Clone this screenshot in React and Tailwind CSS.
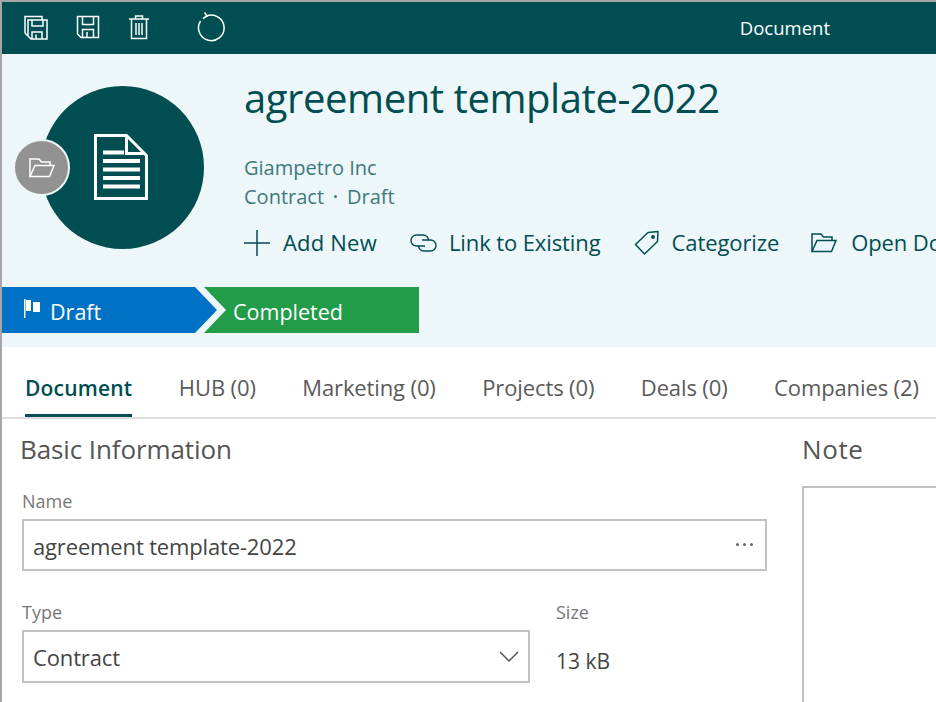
const font = "font-['Open_Sans',sans-serif]";

const TopIcons = () => (
  <div className="flex items-center pb-[2px]">
    <svg width="28" height="28" viewBox="0 0 28 28" fill="none" stroke="white" strokeWidth="1.500" className="ml-[18px] shrink-0">
      <path d="M5 20V3.500h17V7" />
      <path d="M5 20l3 3" />
      <path d="M8 7h19v19H11l-3-3z" />
      <path d="M12 7v6h11V7M12 26v-7h10v7M16 21.500V26" />
    </svg>
    <svg width="26" height="28" viewBox="0 0 26 28" fill="none" stroke="white" strokeWidth="1.500" className="ml-[27px] shrink-0">
      <path d="M2.500 3.500h21v21H6L2.500 21z" />
      <path d="M7.500 3.500v8h11v-8M7.500 24.500v-8h11v8M12 19v5.500" />
    </svg>
    <svg width="24" height="28" viewBox="0 0 24 28" fill="none" stroke="white" strokeWidth="1.500" className="ml-[26px] shrink-0">
      <path d="M2 6h20M8.500 6V3h7v3M4.500 6v19.500h15V6M9 10v12M12 10v12M15 10v12" />
    </svg>
    <svg width="30" height="30" viewBox="0 0 30 30" fill="none" stroke="white" strokeWidth="1.500" className="ml-[46px] shrink-0">
      <path d="M9.500 4a12.800 12.800 0 1 1-6 5" />
      <path d="M7.500 0.500l2.500 3.500-4 2.500" />
    </svg>
  </div>
);

const PlusIcon = () => (
  <svg width="26" height="26" viewBox="0 0 26 26" fill="none" stroke="#004e52" strokeWidth="1.500" className="shrink-0">
    <path d="M13 0v26M0 13h26" />
  </svg>
);

const LinkIcon = () => (
  <svg width="27" height="18" viewBox="0 0 27 18" fill="none" stroke="#004e52" strokeWidth="1.400" className="shrink-0">
    <path d="M15 12H6.500a5.500 5.500 0 0 1 0-11H13a5.500 5.500 0 0 1 5.500 5.500" />
    <path d="M12 6h8.500a5.500 5.500 0 0 1 0 11H14a5.500 5.500 0 0 1-5.500-5.500" />
  </svg>
);

const TagIcon = () => (
  <svg width="26" height="26" viewBox="0 0 26 26" fill="none" stroke="#004e52" strokeWidth="1.500" className="shrink-0">
    <path d="M1.500 14.500 14 2.500l10-1-.5 10L10.500 24z" strokeLinejoin="round" />
    <circle cx="19" cy="7" r="1.200" fill="#004e52" />
  </svg>
);

const FolderIcon = ({ color = "#004e52" }) => (
  <svg width="26" height="20" viewBox="0 0 26 20" fill="none" stroke={color} strokeWidth="1.500" className="shrink-0">
    <path d="M1 18.500V1h9l2.500 3H21v3.500" />
    <path d="M1 18.500 6 7.500h19l-4.500 11z" />
  </svg>
);

const tabs = ["HUB (0)", "Marketing (0)", "Projects (0)", "Deals (0)", "Companies (2)"];

export default function App() {
  return (
    <div className={`${font} h-[702px] w-[936px] overflow-hidden border-l-2 border-t-2 border-[#a6a6a6] bg-white`}>
      <div className="flex h-[52px] items-center justify-between bg-[#004e52] pr-[106px] text-white">
        <TopIcons />
        <span className="text-[18.500px] tracking-normal">Document</span>
      </div>

      <div className="h-[293px] bg-[#edf6f8]">
        <div className="flex h-[233px]">
          <div className="relative ml-[39px] mt-[32px] h-[163px] w-[163px] shrink-0 rounded-full bg-[#004e52]">
            <div className="flex h-full items-center justify-center">
              <svg width="54" height="66" viewBox="0 0 54 66" fill="none" className="mb-[1px] ml-[-4px]">
                <path d="M1.500 1.500h31l20 20v43h-51z" stroke="white" strokeWidth="3" />
                <path d="M32.500 1.500v18h18" stroke="white" strokeWidth="3" />
                <path d="M9 18.500h21M9 27h37M9 35.500h37M9 44h37M9 52.500h37" stroke="white" strokeWidth="4" />
              </svg>
            </div>
            <div className="absolute left-[-28px] top-[53px] flex h-[57px] w-[57px] items-center justify-center rounded-full border-[2px] border-[#edf6f8] bg-[#929292]">
              <FolderIcon color="white" />
            </div>
          </div>
          <div className="ml-[40px] w-max shrink-0">
            <h1 className="mt-[14px] whitespace-nowrap text-[40px] leading-[60px] tracking-[-0.43px] text-[#004e52]">agreement template-2022</h1>
            <div className="mt-[25px] text-[20px] leading-[29px] text-[#3d7a7d]">
              <div>Giampetro Inc</div>
              <div className="flex items-center">
                <span>Contract</span>
                <span className="mx-[10px] h-[3px] w-[3px] rounded-full bg-[#3d7a7d]" />
                <span>Draft</span>
              </div>
            </div>
            <div className="mt-[15px] flex items-center whitespace-nowrap text-[22px] tracking-[-0.1px] text-[#004e52]">
              <PlusIcon />
              <span className="ml-[13px] tracking-[0.2px]">Add New</span>
              <span className="ml-[33px]"><LinkIcon /></span>
              <span className="ml-[12px]">Link to Existing</span>
              <span className="ml-[33px]"><TagIcon /></span>
              <span className="ml-[12px]">Categorize</span>
              <span className="ml-[32px]"><FolderIcon /></span>
              <span className="ml-[14px]">Open Document</span>
            </div>
          </div>
        </div>
        <div className="flex h-[46px] text-[21.500px] text-white">
          <div className="flex w-[215px] items-center bg-[#0072c6] pl-[21px] pt-[5px] [clip-path:polygon(0_0,193px_0,215px_23px,193px_100%,0_100%)]">
            <svg width="18" height="20" viewBox="0 0 18 20" fill="white" className="mb-[8px] shrink-0">
              <path d="M1 0h1.500v19H1zM3 1h5v11H3zM10 3h7v10h-7z" />
            </svg>
            <span className="ml-[9px]">Draft</span>
          </div>
          <div className="ml-[-13px] flex w-[215px] items-center bg-[#229c49] pl-[29px] pt-[5px] [clip-path:polygon(0_0,100%_0,100%_100%,0_100%,22px_23px)]">Completed</div>
        </div>
      </div>

      <div className="flex h-[72px] items-start border-b-2 border-[#dcdcdc] pl-[23px] text-[22px] tracking-[-0.12px] text-[#5a5a5a]">
        <div className="flex h-[70px] items-center border-b-[3px] border-[#004e52] pt-[16px] text-[21px] font-semibold tracking-[0.2px] text-[#004e52]">Document</div>
        {tabs.map((t) => (
          <div key={t} className="ml-[46.500px] flex h-[70px] items-center whitespace-nowrap pt-[10px]">{t}</div>
        ))}
      </div>

      <div className="flex text-[#444]">
        <div className="ml-[18px] w-[747px]">
          <h2 className="mt-[10px] text-[26px] leading-[40px] tracking-[-0.1px] text-[#555]">Basic Information</h2>
          <div className="ml-[2px] mt-[20px] text-[18px] leading-[24px] text-[#777]">Name</div>
          <div className="ml-[2px] mt-[6px] flex h-[52px] items-center justify-between border-2 border-[#c2c2c2] pl-[9px] pr-[12px] pt-[2px] text-[22px] tracking-[-0.15px]">
            <span>agreement template-2022</span>
            <span className="mb-[3px] flex gap-[4px]">
              <span className="h-[3px] w-[3px] rounded-full bg-[#666]" />
              <span className="h-[3px] w-[3px] rounded-full bg-[#666]" />
              <span className="h-[3px] w-[3px] rounded-full bg-[#666]" />
            </span>
          </div>
          <div className="ml-[2px] mt-[29px] flex">
            <div className="w-[508px]">
              <div className="text-[18px] leading-[24px] text-[#777]">Type</div>
              <div className="mt-[6px] flex h-[53px] items-center justify-between border-2 border-[#c2c2c2] pl-[9px] pr-[9px] pt-[1px] text-[22px] tracking-[-0.15px]">
                <span>Contract</span>
                <svg width="20" height="12" viewBox="0 0 20 12" fill="none" stroke="#555" strokeWidth="1.500" className="shrink-0">
                  <path d="M1 1l9 9 9-9" />
                </svg>
              </div>
            </div>
            <div className="ml-[26px]">
              <div className="text-[18px] leading-[24px] text-[#777]">Size</div>
              <div className="mt-[22px] text-[21px]">13 kB</div>
            </div>
          </div>
        </div>
        <div className="ml-[35px] flex-1">
          <h2 className="mt-[10px] text-[26px] leading-[40px] tracking-[0.6px] text-[#555]">Note</h2>
          <div className="mt-[17px] h-[300px] border-2 border-r-0 border-[#c2c2c2]" />
        </div>
      </div>
    </div>
  );
}
